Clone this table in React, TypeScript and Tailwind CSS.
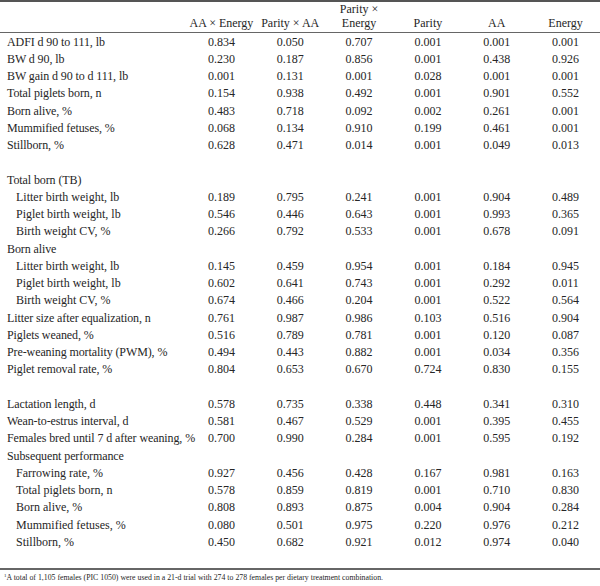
import React from "react";

type Row = { label: string; indent?: boolean; vals?: string[]; blank?: boolean };

const rows: Row[] = [
  { label: "ADFI d 90 to 111, lb", vals: ["0.834", "0.050", "0.707", "0.001", "0.001", "0.001"] },
  { label: "BW d 90, lb", vals: ["0.230", "0.187", "0.856", "0.001", "0.438", "0.926"] },
  { label: "BW gain d 90 to d 111, lb", vals: ["0.001", "0.131", "0.001", "0.028", "0.001", "0.001"] },
  { label: "Total piglets born, n", vals: ["0.154", "0.938", "0.492", "0.001", "0.901", "0.552"] },
  { label: "Born alive, %", vals: ["0.483", "0.718", "0.092", "0.002", "0.261", "0.001"] },
  { label: "Mummified fetuses, %", vals: ["0.068", "0.134", "0.910", "0.199", "0.461", "0.001"] },
  { label: "Stillborn, %", vals: ["0.628", "0.471", "0.014", "0.001", "0.049", "0.013"] },
  { label: "", blank: true },
  { label: "Total born (TB)" },
  { label: "Litter birth weight, lb", indent: true, vals: ["0.189", "0.795", "0.241", "0.001", "0.904", "0.489"] },
  { label: "Piglet birth weight, lb", indent: true, vals: ["0.546", "0.446", "0.643", "0.001", "0.993", "0.365"] },
  { label: "Birth weight CV, %", indent: true, vals: ["0.266", "0.792", "0.533", "0.001", "0.678", "0.091"] },
  { label: "Born alive" },
  { label: "Litter birth weight, lb", indent: true, vals: ["0.145", "0.459", "0.954", "0.001", "0.184", "0.945"] },
  { label: "Piglet birth weight, lb", indent: true, vals: ["0.602", "0.641", "0.743", "0.001", "0.292", "0.011"] },
  { label: "Birth weight CV, %", indent: true, vals: ["0.674", "0.466", "0.204", "0.001", "0.522", "0.564"] },
  { label: "Litter size after equalization, n", vals: ["0.761", "0.987", "0.986", "0.103", "0.516", "0.904"] },
  { label: "Piglets weaned, %", vals: ["0.516", "0.789", "0.781", "0.001", "0.120", "0.087"] },
  { label: "Pre-weaning mortality (PWM), %", vals: ["0.494", "0.443", "0.882", "0.001", "0.034", "0.356"] },
  { label: "Piglet removal rate, %", vals: ["0.804", "0.653", "0.670", "0.724", "0.830", "0.155"] },
  { label: "", blank: true },
  { label: "Lactation length, d", vals: ["0.578", "0.735", "0.338", "0.448", "0.341", "0.310"] },
  { label: "Wean-to-estrus interval, d", vals: ["0.581", "0.467", "0.529", "0.001", "0.395", "0.455"] },
  { label: "Females bred until 7 d after weaning, %", vals: ["0.700", "0.990", "0.284", "0.001", "0.595", "0.192"] },
  { label: "Subsequent performance" },
  { label: "Farrowing rate, %", indent: true, vals: ["0.927", "0.456", "0.428", "0.167", "0.981", "0.163"] },
  { label: "Total piglets born, n", indent: true, vals: ["0.578", "0.859", "0.819", "0.001", "0.710", "0.830"] },
  { label: "Born alive, %", indent: true, vals: ["0.808", "0.893", "0.875", "0.004", "0.904", "0.284"] },
  { label: "Mummified fetuses, %", indent: true, vals: ["0.080", "0.501", "0.975", "0.220", "0.976", "0.212"] },
  { label: "Stillborn, %", indent: true, vals: ["0.450", "0.682", "0.921", "0.012", "0.974", "0.040"] },
];

const headers: React.ReactNode[] = [
  "AA × Energy",
  "Parity × AA",
  <>
    <span className="block">Parity ×</span>
    <span className="block">Energy</span>
  </>,
  "Parity",
  "AA",
  "Energy",
];

export default function App() {
  return (
    <div
      className="w-[600px] h-[586px] bg-white text-[#262626] overflow-hidden"
      style={{ fontFamily: '"Liberation Serif", "Times New Roman", serif' }}
    >
      <div className="border-t-2 border-[#555]">
        <div className="grid grid-cols-[187px_repeat(6,1fr)] h-[30px] items-end text-[12px] leading-[14px] pb-[2px]">
          <div />
          {headers.map((h, i) => (
            <div key={i} className="text-center">
              {h}
            </div>
          ))}
        </div>
        <div className="border-t border-[#666]" />
        {rows.map((r, i) => (
          <div
            key={i}
            className="grid grid-cols-[187px_repeat(6,1fr)] h-[17.25px] items-center text-[12px] leading-[14px]"
          >
            <div
              className={
                r.indent
                  ? "pl-[16px] whitespace-nowrap"
                  : "pl-[7px] whitespace-nowrap tracking-[-0.1px]"
              }
            >
              {r.label}
            </div>
            {(r.vals ?? ["", "", "", "", "", ""]).map((v, j) => (
              <div key={j} className="text-center">
                {v}
              </div>
            ))}
          </div>
        ))}
        <div className="border-t-2 border-[#666] mt-[17px]" />
        <div className="pl-[4px] pt-[3px] text-[7.8px] leading-[10px]">
          <sup className="text-[5px]">1</sup>A total of 1,105 females (PIC 1050) were used in a 21-d trial with 274 to 278 females per dietary treatment combination.
        </div>
      </div>
    </div>
  );
}
